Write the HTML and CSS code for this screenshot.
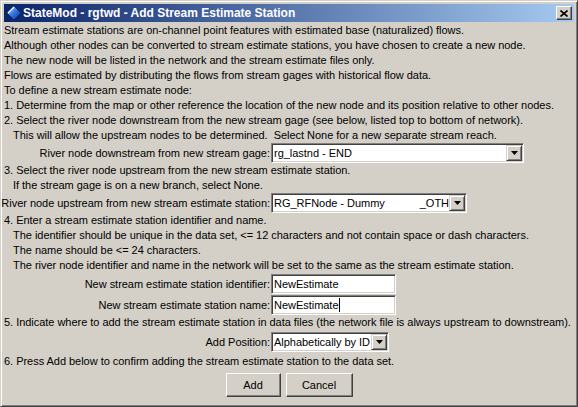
FILE: index.html
```html
<!DOCTYPE html>
<html>
<head>
<meta charset="utf-8">
<link rel="stylesheet" href="styles.css">
</head>
<body>
<div class="window">
  <div class="titlebar">
    <svg class="app-icon" width="16" height="16" viewBox="0 0 16 16">
      <defs>
        <linearGradient id="ig" x1="0" y1="0" x2="1" y2="1">
          <stop offset="0" stop-color="#bfe0ff"/>
          <stop offset="0.45" stop-color="#3a7ee8"/>
          <stop offset="1" stop-color="#0a2a8a"/>
        </linearGradient>
      </defs>
      <path d="M8 1 Q10 3 14.5 7.5 Q15 8 14.5 8.5 L8.5 14.5 Q8 15 7.5 14.5 L1.5 8.5 Q1 8 1.5 7.5 Z" fill="url(#ig)" stroke="#08206a" stroke-width="0.8"/>
      <path d="M2 8 L8 2" stroke="#ffffff" stroke-width="1.2" fill="none"/>
    </svg>
    <span class="title">StateMod - rgtwd - Add Stream Estimate Station</span>
    <span class="close">
      <svg width="8" height="7" viewBox="0 0 8 7"><path d="M0.5 0.5 L7.5 6.5 M7.5 0.5 L0.5 6.5" stroke="#000" stroke-width="1.6" fill="none"/></svg>
    </span>
  </div>
  <div class="content">
    <div class="line">Stream estimate stations are on-channel point features with estimated base (naturalized) flows.</div>
    <div class="line">Although other nodes can be converted to stream estimate stations, you have chosen to create a new node.</div>
    <div class="line">The new node will be listed in the network and the stream estimate files only.</div>
    <div class="line">Flows are estimated by distributing the flows from stream gages with historical flow data.</div>
    <div class="line">To define a new stream estimate node:</div>
    <div class="line">1. Determine from the map or other reference the location of the new node and its position relative to other nodes.</div>
    <div class="line">2. Select the river node downstream from the new stream gage (see below, listed top to bottom of network).</div>
    <div class="line indent">This will allow the upstream nodes to be determined.  Select None for a new separate stream reach.</div>
    <div class="frow">
      <span class="flabel">River node downstream from new stream gage:</span>
      <div class="combo combo-down">
        <span class="combo-text">rg_lastnd - END</span>
        <span class="combo-btn"><svg width="7" height="4" viewBox="0 0 7 4"><path d="M0 0 H7 L3.5 4 Z" fill="#000"/></svg></span>
      </div>
    </div>
    <div class="line">3. Select the river node upstream from the new stream estimate station.</div>
    <div class="line indent">If the stream gage is on a new branch, select None.</div>
    <div class="frow">
      <span class="flabel">River node upstream from new stream estimate station:</span>
      <div class="combo combo-up">
        <span class="combo-text split"><span>RG_RFNode - Dummy</span><span>_OTH</span></span>
        <span class="combo-btn"><svg width="7" height="4" viewBox="0 0 7 4"><path d="M0 0 H7 L3.5 4 Z" fill="#000"/></svg></span>
      </div>
    </div>
    <div class="line">4. Enter a stream estimate station identifier and name.</div>
    <div class="line indent">The identifier should be unique in the data set, &lt;= 12 characters and not contain space or dash characters.</div>
    <div class="line indent">The name should be &lt;= 24 characters.</div>
    <div class="line indent">The river node identifier and name in the network will be set to the same as the stream estimate station.</div>
    <div class="frow frow-field1">
      <span class="flabel">New stream estimate station identifier:</span>
      <div class="tfield">NewEstimate</div>
    </div>
    <div class="frow frow-field2">
      <span class="flabel">New stream estimate station name:</span>
      <div class="tfield">NewEstimate<span class="caret"></span></div>
    </div>
    <div class="line">5. Indicate where to add the stream estimate station in data files (the network file is always upstream to downstream).</div>
    <div class="frow frow-pos">
      <span class="flabel">Add Position:</span>
      <div class="combo combo-pos">
        <span class="combo-text">Alphabetically by ID</span>
        <span class="combo-btn"><svg width="7" height="4" viewBox="0 0 7 4"><path d="M0 0 H7 L3.5 4 Z" fill="#000"/></svg></span>
      </div>
    </div>
    <div class="line line-last">6. Press Add below to confirm adding the stream estimate station to the data set.</div>
    <div class="buttons">
      <button class="btn btn-add">Add</button>
      <button class="btn btn-cancel">Cancel</button>
    </div>
  </div>
</div>
</body>
</html>
```
FILE: styles.css
```css
* { box-sizing: border-box; }
html, body { margin: 0; padding: 0; background: #d4d0c8; }

.window {
  width: 578px;
  height: 407px;
  background: #d4d0c8;
  border: 1px solid;
  border-color: #d4d0c8 #404040 #404040 #d4d0c8;
  box-shadow: inset 1px 1px #ffffff, inset -1px -1px #808080;
  padding: 3px;
  overflow: hidden;
}

.titlebar {
  height: 18px;
  display: flex;
  align-items: center;
  padding: 0 2px;
  background: linear-gradient(to right, #0a246a, #a6caf0);
}
.app-icon { flex: none; margin-right: 1px; }
.title {
  flex: 1;
  font: bold 12px "Liberation Sans", Arial, sans-serif;
  color: #ffffff;
  white-space: pre;
}
.close {
  flex: none;
  width: 16px;
  height: 14px;
  display: flex;
  align-items: center;
  justify-content: center;
  background: #d4d0c8;
  border: 1px solid;
  border-color: #ffffff #404040 #404040 #ffffff;
  box-shadow: inset -1px -1px #808080;
}

.content {
  padding-top: 1px;
  display: flex;
  flex-direction: column;
  font: 11px/15px "Liberation Sans", Arial, sans-serif;
  letter-spacing: -0.03px;
  color: #000;
}
.line { height: 15px; white-space: pre; }
.indent { padding-left: 9px; }

.frow { display: flex; align-items: center; height: 20px; }
.frow-field1 { margin-top: 1px; }
.frow-field2 { margin-top: 1px; }
.frow-pos { margin-top: 2px; }
.line-last { margin-top: 2px; }

.flabel {
  flex: none;
  width: 267px;
  padding-right: 1px;
  display: flex;
  justify-content: flex-end;
  white-space: pre;
}

.combo {
  height: 20px;
  display: flex;
  background: #ffffff;
  border: 1px solid;
  border-color: #808080 #ffffff #ffffff #808080;
  box-shadow: inset 1px 1px #404040, inset -1px -1px #d4d0c8;
  padding: 1px;
}
.combo-down { width: 253px; }
.combo-up { width: 196px; }
.combo-pos { width: 118px; }
.combo-text {
  flex: 1;
  min-width: 0;
  overflow: hidden;
  white-space: pre;
  line-height: 16px;
  padding-left: 1px;
}
.split { display: flex; justify-content: space-between; }
.combo-btn {
  flex: none;
  width: 16px;
  height: 16px;
  display: flex;
  align-items: center;
  justify-content: center;
  background: #d4d0c8;
  border: 1px solid;
  border-color: #d4d0c8 #404040 #404040 #d4d0c8;
  box-shadow: inset 1px 1px #ffffff, inset -1px -1px #808080;
}

.tfield {
  width: 125px;
  height: 20px;
  display: flex;
  align-items: center;
  background: #ffffff;
  border: 1px solid;
  border-color: #808080 #ffffff #ffffff #808080;
  box-shadow: inset 1px 1px #404040, inset -1px -1px #d4d0c8;
  padding: 1px 2px;
  white-space: pre;
  line-height: 16px;
}
.caret { display: inline-block; width: 1px; height: 14px; background: #000; margin-left: 1px; }

.buttons {
  display: flex;
  justify-content: center;
  gap: 5px;
  margin-top: 4px;
}
.btn {
  height: 24px;
  font: 11px "Liberation Sans", Arial, sans-serif;
  color: #000;
  background: #d4d0c8;
  border: 1px solid;
  border-color: #ffffff #404040 #404040 #ffffff;
  box-shadow: inset -1px -1px #808080;
  padding: 0;
}
.btn-add { width: 55px; }
.btn-cancel { width: 67px; }
```
